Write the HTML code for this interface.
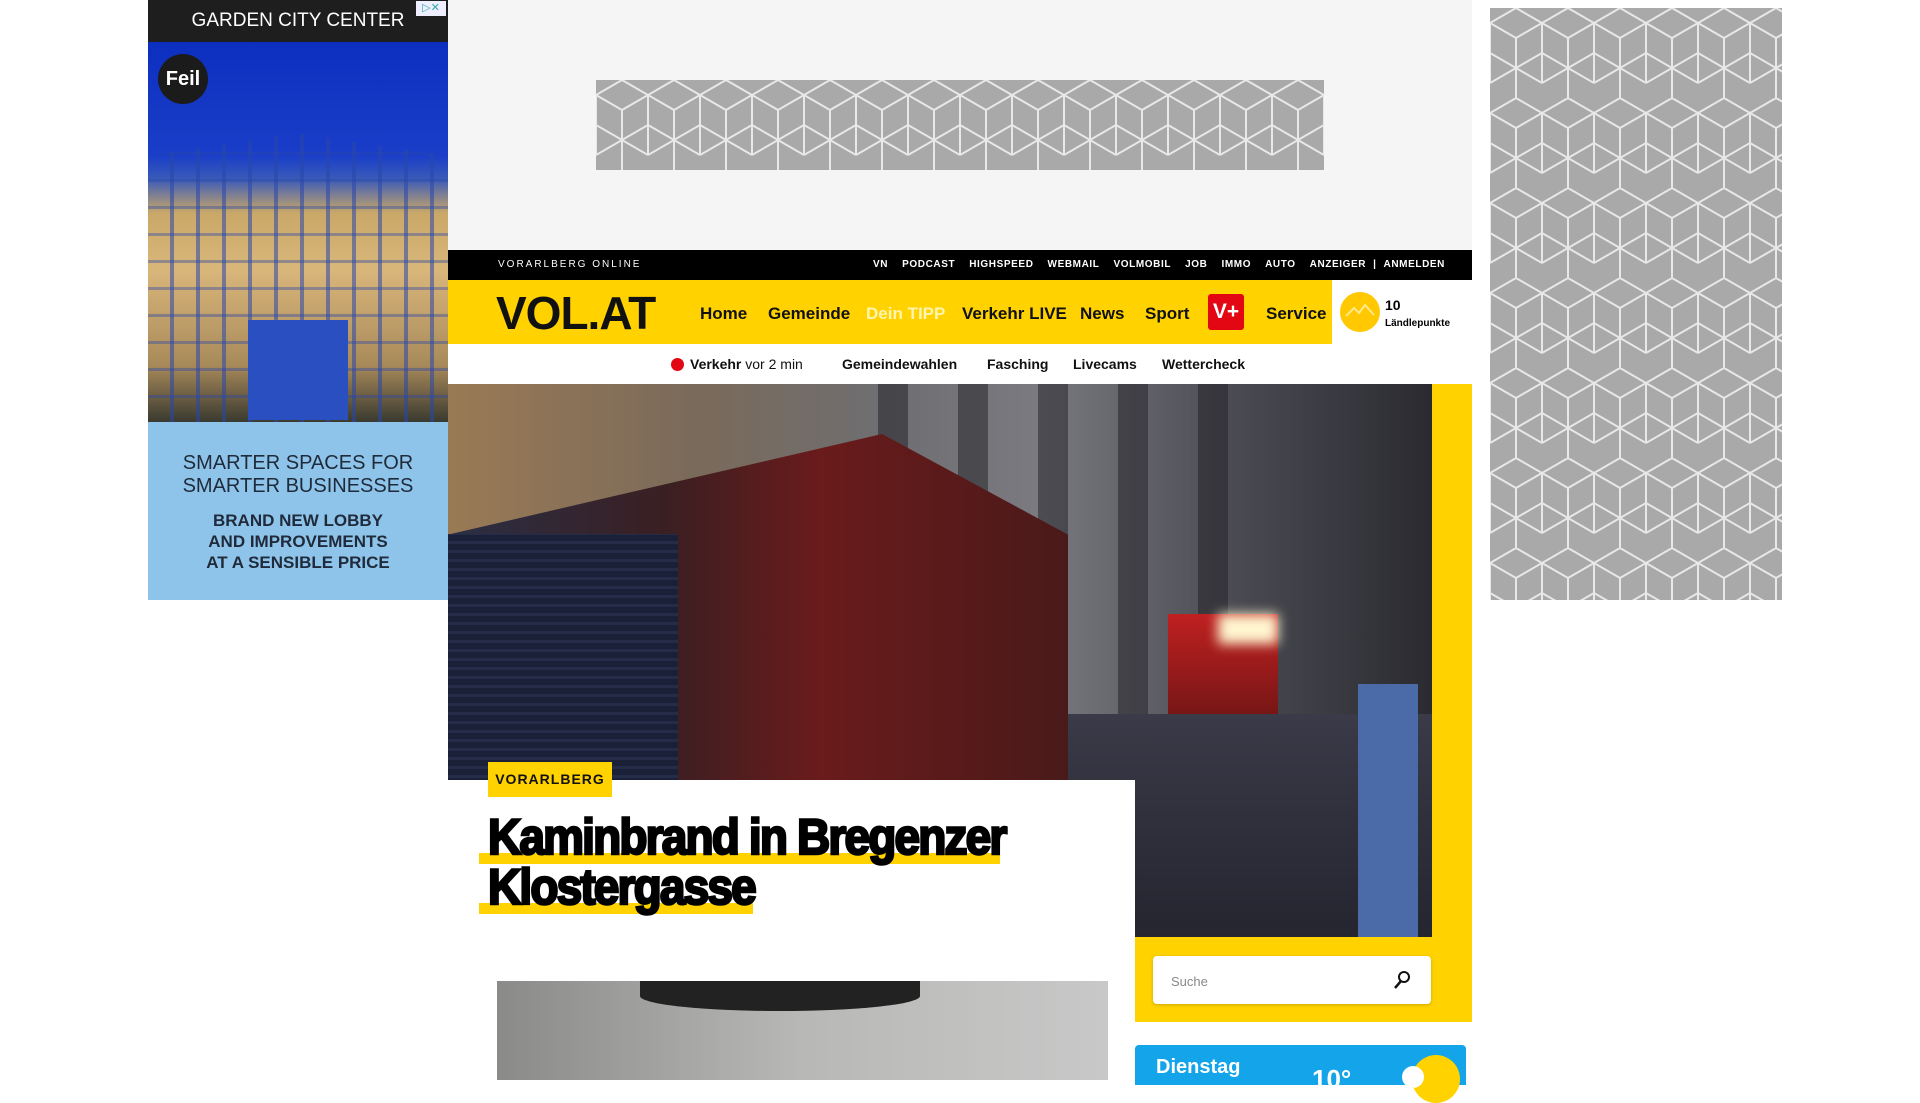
<!DOCTYPE html>
<html><head><meta charset="utf-8"><style>
*{margin:0;padding:0;box-sizing:border-box}
body{width:1920px;height:1080px;overflow:hidden;background:#fff;font-family:"Liberation Sans",sans-serif;position:relative}
.abs{position:absolute}
.nav a{position:absolute;top:304px;font-size:17px;font-weight:bold;color:#111;text-decoration:none;font-family:"Liberation Sans Narrow","Liberation Sans",sans-serif}
.top span{margin-left:14px;letter-spacing:.6px}
.sub span{position:absolute;top:356px;font-size:14px;font-weight:bold;color:#111}
</style></head><body>
<svg width="0" height="0" style="position:absolute"><defs>
<pattern id="cube" width="52" height="90" patternUnits="userSpaceOnUse">
<rect width="52" height="90" fill="#a9a9a9"/>
<path d="M0 15L26 0L52 15M0 15V45L26 60L52 45V15M26 30L0 15M26 30L52 15M26 30V60M26 60V90M0 75L26 60L52 75M0 45V75M52 45V75" stroke="#e8e8e8" stroke-width="2" fill="none"/>
</pattern></defs></svg>

<!-- left ad -->
<div class="abs" style="left:148px;top:0;width:300px;height:600px;background:#8fc4ea">
 <div class="abs" style="left:0;top:0;width:300px;height:42px;background:#1e1e1e;color:#fff;font-size:19px;text-align:center;line-height:42px">GARDEN CITY CENTER</div>
 <div class="abs" style="right:2px;top:1px;width:30px;height:15px;background:#eef;font-size:11px;color:#3aa;line-height:15px;text-align:center">▷✕</div>
 <div class="abs" style="left:0;top:42px;width:300px;height:380px;background:linear-gradient(#0d2fc0 0%,#1a3ec8 30%,#3a5ab8 36%,#c9a868 45%,#d9b67a 60%,#a88a5a 85%,#3a3a30 100%)"></div>
 <div class="abs" style="left:0;top:42px;width:300px;height:380px;background:repeating-linear-gradient(90deg,transparent 0 22px,rgba(40,70,170,.55) 22px 26px),repeating-linear-gradient(0deg,transparent 0 24px,rgba(40,70,170,.4) 24px 27px);clip-path:polygon(0 30%,50% 24%,100% 30%,100% 100%,0 100%)"></div>
 <div class="abs" style="left:100px;top:320px;width:100px;height:100px;background:#2a4fc0"></div>
 <div class="abs" style="left:10px;top:54px;width:50px;height:50px;border-radius:50%;background:#1b1b1b;color:#fff;font-weight:bold;font-size:20px;text-align:center;line-height:50px">Feil</div>
 <div class="abs" style="left:0;top:452px;width:300px;text-align:center;color:#1f2a3a;font-size:20px;line-height:23px">SMARTER SPACES FOR<br>SMARTER BUSINESSES</div>
 <div class="abs" style="left:0;top:510px;width:300px;text-align:center;color:#1f2a3a;font-size:17px;font-weight:bold;line-height:21px">BRAND NEW LOBBY<br>AND IMPROVEMENTS<br>AT A SENSIBLE PRICE</div>
</div>

<!-- top grey area -->
<div class="abs" style="left:448px;top:0;width:1024px;height:250px;background:#f5f5f5"></div>
<svg class="abs" style="left:596px;top:80px" width="728" height="90"><rect width="728" height="90" fill="url(#cube)"/></svg>
<svg class="abs" style="left:1490px;top:8px" width="292" height="592"><rect width="292" height="592" fill="url(#cube)"/></svg>

<!-- black bar -->
<div class="abs top" style="left:448px;top:250px;width:1024px;height:30px;background:#000;color:#fff;font-size:10px;font-weight:bold;line-height:30px">
 <div class="abs" style="left:50px;letter-spacing:2px;font-weight:normal">VORARLBERG ONLINE</div>
 <div class="abs" style="right:27px"><span>VN</span><span>PODCAST</span><span>HIGHSPEED</span><span>WEBMAIL</span><span>VOLMOBIL</span><span>JOB</span><span>IMMO</span><span>AUTO</span><span>ANZEIGER</span><span style="margin-left:7px">|</span><span style="margin-left:7px">ANMELDEN</span></div>
</div>
<!-- yellow nav -->
<div class="abs" style="left:448px;top:280px;width:884px;height:64px;background:#ffd200"></div>
<div class="abs" style="left:1332px;top:280px;width:140px;height:64px;background:#fff"></div>
<div class="abs" style="left:496px;top:286px;font-size:46px;font-weight:bold;color:#111;letter-spacing:-1px">VOL.AT</div>
<div class="nav">
<a style="left:700px">Home</a><a style="left:768px">Gemeinde</a><a style="left:866px;color:#fff4b0">Dein TIPP</a><a style="left:962px">Verkehr LIVE</a><a style="left:1080px">News</a><a style="left:1145px">Sport</a><a style="left:1266px">Service</a>
</div>
<div class="abs" style="left:1208px;top:294px;width:36px;height:36px;background:#e30613;border-radius:3px;color:#fff;font-weight:bold;font-size:21px;text-align:center;line-height:36px">V+</div>
<div class="abs" style="left:1340px;top:292px;width:40px;height:40px;border-radius:50%;background:#ffc800"></div>
<svg class="abs" style="left:1344px;top:300px" width="32" height="20"><path d="M2 16L10 8L15 13L21 5L30 15" stroke="#ffe98a" stroke-width="2" fill="none"/></svg>
<div class="abs" style="left:1385px;top:297px;font-size:14px;font-weight:bold">10</div>
<div class="abs" style="left:1385px;top:318px;font-size:10px;font-weight:bold">Ländlepunkte</div>
<!-- sub nav -->
<div class="sub">
<div class="abs" style="left:671px;top:358px;width:13px;height:13px;border-radius:50%;background:#e30613"></div>
<span style="left:690px">Verkehr <b style="font-weight:normal">vor 2 min</b></span>
<span style="left:842px">Gemeindewahlen</span><span style="left:987px">Fasching</span><span style="left:1073px">Livecams</span><span style="left:1162px">Wettercheck</span>
</div>
<!-- hero -->
<div class="abs" style="left:1432px;top:384px;width:40px;height:638px;background:#ffd200"></div>
<div class="abs" style="left:448px;top:384px;width:984px;height:553px;overflow:hidden;background:#23242c">
 <div class="abs" style="left:0;top:0;width:984px;height:330px;background:linear-gradient(90deg,#9a7a55 0%,#7a6a5a 25%,#6e6e72 45%,#7a7a80 60%,#4a4a52 80%,#2a2a30 100%)"></div>
 <div class="abs" style="left:380px;top:0;width:420px;height:330px;background:repeating-linear-gradient(90deg,transparent 0 50px,rgba(30,30,35,.5) 50px 80px)"></div>
 <div class="abs" style="left:0;top:50px;width:620px;height:503px;background:linear-gradient(90deg,#2a2f45 0%,#3a1f22 35%,#6a1b1b 60%,#4a1a1a 100%);clip-path:polygon(0 20%,70% 0,100% 20%,100% 100%,0 100%)"></div>
 <div class="abs" style="left:0;top:150px;width:230px;height:403px;background:repeating-linear-gradient(0deg,#1a2038 0 6px,#252c48 6px 9px)"></div>
 <div class="abs" style="left:720px;top:230px;width:110px;height:110px;background:linear-gradient(#c02020,#701515)"></div>
 <div class="abs" style="left:770px;top:230px;width:60px;height:30px;background:#fff6d0;filter:blur(6px)"></div>
 <div class="abs" style="left:620px;top:330px;width:364px;height:223px;background:linear-gradient(#3a3a48,#252530)"></div>
 <div class="abs" style="left:910px;top:300px;width:60px;height:253px;background:#4a6aa8"></div>
</div>
<!-- white headline box -->
<div class="abs" style="left:448px;top:780px;width:687px;height:300px;background:#fff"></div>
<div class="abs" style="left:488px;top:762px;width:124px;height:35px;background:#ffd200;font-size:14px;font-weight:bold;letter-spacing:1px;text-align:center;line-height:35px;color:#111">VORARLBERG</div>
<div class="abs" style="left:479px;top:853px;width:521px;height:11px;background:#ffd200"></div>
<div class="abs" style="left:479px;top:903px;width:274px;height:11px;background:#ffd200"></div>
<div class="abs" style="left:488px;top:812px;font-size:50px;font-weight:bold;line-height:50px;letter-spacing:-2px;transform:scaleX(.92);transform-origin:left;color:#000;-webkit-text-stroke:2.5px #000;white-space:nowrap">Kaminbrand in Bregenzer<br>Klostergasse</div>
<div class="abs" style="left:497px;top:981px;width:611px;height:99px;background:linear-gradient(90deg,#8a8a88,#b8b8b6 50%,#c8c8c8)"></div>
<div class="abs" style="left:640px;top:981px;width:280px;height:30px;border-radius:0 0 50% 50%;background:#222"></div>
<!-- search -->
<div class="abs" style="left:1135px;top:937px;width:337px;height:85px;background:#ffd200"></div>
<div class="abs" style="left:1153px;top:956px;width:278px;height:48px;background:#fff;border-radius:4px;box-shadow:0 1px 3px rgba(0,0,0,.2)"></div>
<div class="abs" style="left:1171px;top:974px;font-size:13px;color:#888">Suche</div>
<svg class="abs" style="left:1392px;top:970px" width="20" height="20"><circle cx="12" cy="7" r="5" stroke="#111" stroke-width="2" fill="none"/><path d="M9 11L3 18" stroke="#111" stroke-width="2.5"/></svg>
<!-- weather -->
<div class="abs" style="left:1135px;top:1045px;width:331px;height:40px;background:#14a4ea;border-radius:4px 4px 0 0"></div>
<div class="abs" style="left:1412px;top:1055px;width:48px;height:48px;border-radius:50%;background:#ffd200"></div>
<div class="abs" style="left:1402px;top:1066px;width:22px;height:22px;border-radius:50%;background:#fff"></div>
<div class="abs" style="left:1156px;top:1056px;font-size:20px;font-weight:bold;color:#fff">Dienstag</div>
<div class="abs" style="left:1312px;top:1064px;font-size:26px;font-weight:bold;color:#fff">10°</div>
</body></html>
